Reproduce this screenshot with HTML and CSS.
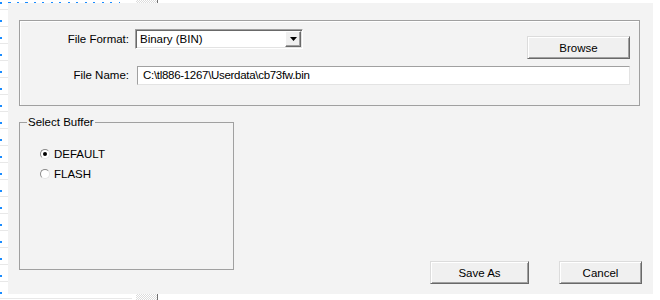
FILE: index.html
```html
<!DOCTYPE html>
<html lang="en">

<head>
    <meta charset="UTF-8">
    <meta name="viewport" content="width=device-width, initial-scale=1.0">
    <title>Save Buffer</title>
    <link rel="stylesheet" href="styles.css">
</head>

<body>
    <div class="page">
        <div class="dots_top"></div>
        <div class="rows">
            <div class="row"></div><div class="row"></div><div class="row"></div>
            <div class="row"></div><div class="row"></div><div class="row"></div>
            <div class="row"></div><div class="row"></div><div class="row"></div>
            <div class="row"></div><div class="row"></div><div class="row"></div>
            <div class="row"></div><div class="row"></div><div class="row"></div>
            <div class="row"></div><div class="row"></div>
        </div>
        <div class="splitter"></div>

        <div class="dialog">
            <div class="group file_group">
                <div class="field_row">
                    <label class="field_label">File Format:</label>
                    <div class="combo">
                        <span class="combo_text">Binary (BIN)</span>
                        <span class="combo_btn">
                            <svg width="7" height="4" viewBox="0 0 7 4"><path d="M0 0H7L3.5 4Z" fill="#000"/></svg>
                        </span>
                    </div>
                    <button class="btn btn_browse">Browse</button>
                </div>
                <div class="field_row name_row">
                    <label class="field_label">File Name:</label>
                    <div class="textbox">C:\tl886-1267\Userdata\cb73fw.bin</div>
                </div>
            </div>

            <div class="lower">
                <fieldset class="buffer">
                    <legend>Select Buffer</legend>
                    <label class="radio"><span class="radio_dot checked"></span>DEFAULT</label>
                    <label class="radio"><span class="radio_dot"></span>FLASH</label>
                </fieldset>
                <div class="actions">
                    <button class="btn btn_save">Save As</button>
                    <button class="btn btn_cancel">Cancel</button>
                </div>
            </div>
        </div>
    </div>
</body>

</html>
```

FILE: styles.css
```css
* {
    margin: 0;
    padding: 0;
    box-sizing: border-box;
}

body {
    background-color: #fff;
    font-family: "Liberation Sans", Arial, sans-serif;
    font-size: 11.5px;
    color: #000;
}

.page {
    position: relative;
    width: 660px;
    height: 300px;
    overflow: hidden;
}

/* window behind the dialog */
.dots_top {
    position: absolute;
    left: 0;
    top: 2px;
    width: 120px;
    height: 2px;
    background: repeating-linear-gradient(90deg, #1a8cff 0 2px, transparent 2px 8.5px);
}

.rows {
    width: 132px;
    margin-top: 9px;
    border-top: 1px solid #e8e8e8;
}

.row {
    position: relative;
    height: 17px;
    border-bottom: 1px solid #e8e8e8;
}

.row::before {
    content: "";
    position: absolute;
    left: 0;
    top: 10px;
    width: 2px;
    height: 2px;
    background-color: #1a8cff;
}

.splitter {
    position: absolute;
    left: 136px;
    top: 0;
    width: 22px;
    height: 300px;
    background: repeating-conic-gradient(#dcdcdc 0 25%, #fff 0 50%) 0 0 / 2px 2px;
    border-right: 1px solid #707070;
}

/* dialog */
.dialog {
    position: absolute;
    left: 8px;
    top: 3px;
    width: 645px;
    height: 291px;
    background-color: #f3f3f3;
    padding: 17px 13px 10px 11px;
    display: flex;
    flex-direction: column;
}

.group {
    border: 1px solid #a0a0a0;
    box-shadow: inset 1px 1px 0 #fff;
}

.file_group {
    padding: 8px 9px 20px 0;
}

.field_row {
    display: flex;
    align-items: flex-start;
}

.field_label {
    width: 109px;
    text-align: right;
    line-height: 20px;
}

.combo {
    display: flex;
    align-items: center;
    width: 168px;
    height: 20px;
    margin-left: 6px;
    background-color: #fff;
    border: 1px solid;
    border-color: #a0a0a0 #fff #fff #a0a0a0;
    box-shadow: inset 1px 1px 0 #696969, inset -1px -1px 0 #e3e3e3;
    padding: 1px;
}

.combo_text {
    flex: 1;
    padding-left: 3px;
}

.combo_btn {
    display: flex;
    align-items: center;
    justify-content: center;
    width: 16px;
    height: 16px;
    background-color: #f0f0f0;
    border: 1px solid;
    border-color: #fff #696969 #696969 #fff;
    box-shadow: inset -1px -1px 0 #a0a0a0;
}

.textbox {
    flex: 1;
    height: 19px;
    margin-left: 8px;
    padding-left: 5px;
    line-height: 17px;
    letter-spacing: -0.3px;
    background-color: #fff;
    border: 1px solid;
    border-color: #a0a0a0 #e3e3e3 #e3e3e3 #a0a0a0;
}

.name_row {
    margin-top: 7px;
}

.name_row .field_label {
    line-height: 19px;
}

.btn {
    font-family: inherit;
    font-size: 11.5px;
    color: #000;
    height: 23px;
    background-color: #f0f0f0;
    border: 1px solid;
    border-color: #dcdcdc #696969 #696969 #dcdcdc;
    box-shadow: inset 1px 1px 0 #fff, inset -1px -1px 0 #a0a0a0;
    cursor: pointer;
}

.btn_browse {
    width: 103px;
    margin-left: auto;
    margin-top: 7px;
}

.lower {
    flex: 1;
    display: flex;
}

.buffer {
    align-self: flex-start;
    width: 215px;
    height: 155px;
    margin-top: 9px;
    border: 1px solid #a0a0a0;
    padding: 15px 0 0 0;
}

.buffer legend {
    margin-left: 7px;
    padding: 0 1px;
    line-height: 14px;
}

.radio {
    display: flex;
    align-items: center;
    height: 20px;
    padding-left: 20px;
}

.radio_dot {
    position: relative;
    width: 10px;
    height: 10px;
    margin-right: 4px;
    border-radius: 50%;
    background-color: #fff;
    border: 1px solid;
    border-color: #8a8a8a #e3e3e3 #e3e3e3 #8a8a8a;
}

.radio_dot.checked::after {
    content: "";
    position: absolute;
    left: 2px;
    top: 2px;
    width: 4px;
    height: 4px;
    border-radius: 50%;
    background-color: #000;
}

.actions {
    align-self: flex-end;
    display: flex;
    gap: 30px;
    margin-left: auto;
    margin-right: -2px;
}

.btn_save {
    width: 99px;
}

.btn_cancel {
    width: 83px;
}
```
